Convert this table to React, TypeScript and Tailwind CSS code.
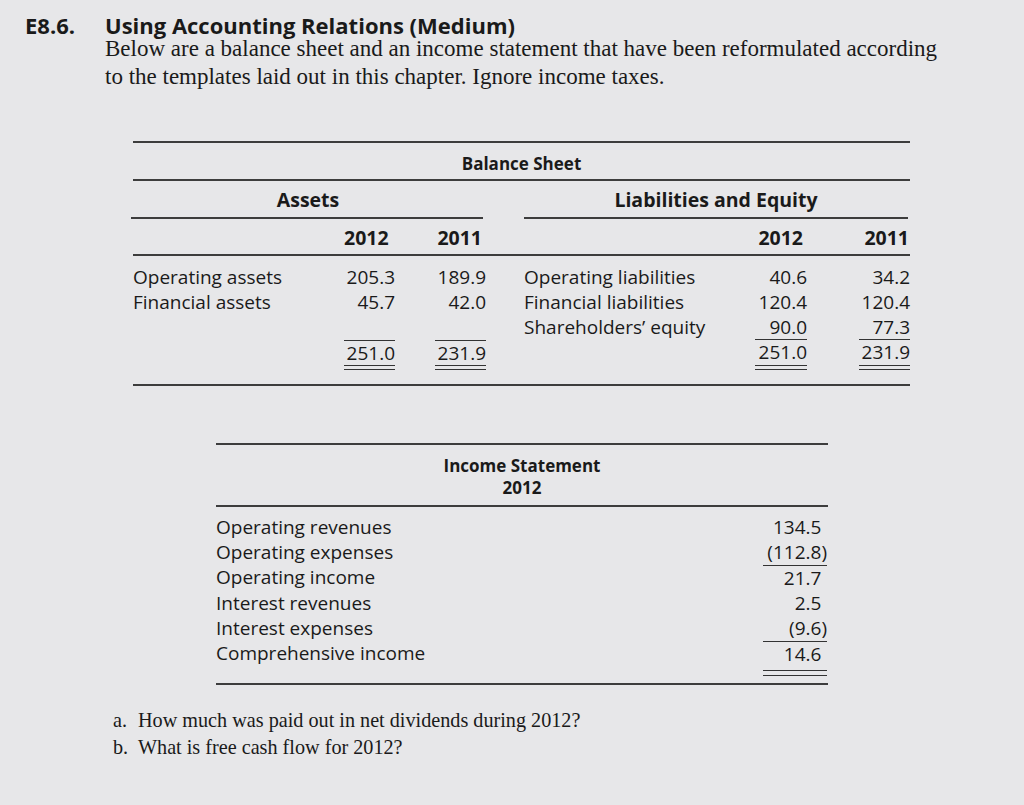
import React from "react";

const sans = "font-['Open_Sans',_'Noto_Sans',_sans-serif]";
const serif = "font-['Liberation_Serif',_'Times_New_Roman',_serif]";

function Line({ className = "" }: { className?: string }) {
  return <div className={`h-[2px] bg-[#3d3d3d] ${className}`} />;
}

function DoubleRule({ w }: { w: string }) {
  return (
    <div className={`${w} flex flex-col gap-[3px]`}>
      <div className="h-px bg-[#333]" />
      <div className="h-px bg-[#333]" />
    </div>
  );
}

function BalanceSection({
  labelW,
  gapW,
  c1W,
  c2W,
  rows,
  totals,
  underline3,
}: {
  labelW: string;
  gapW: string;
  c1W: string;
  c2W: string;
  rows: [string, string, string][];
  totals: [string, string];
  underline3: boolean;
}) {
  const full: [string, string, string][] = [...rows];
  while (full.length < 3) full.push(["", "", ""]);
  return (
    <div className="flex flex-col">
      {full.map((r, i) => (
        <div key={i} className="flex h-[25px] leading-[25px]">
          <div className={`${labelW}`}>{r[0]}</div>
          <div
            className={`${c1W} text-right ${
              i === 2 && underline3 ? "border-b border-[#333]" : ""
            }`}
          >
            {r[1]}
          </div>
          <div className={gapW} />
          <div
            className={`${c2W} text-right ${
              i === 2 && underline3 ? "border-b border-[#333]" : ""
            }`}
          >
            {r[2]}
          </div>
        </div>
      ))}
      <div className="flex">
        <div className={labelW} />
        <div className={`${c1W} flex flex-col`}>
          <div
            className={`h-[25px] leading-[25px] text-right ${
              underline3 ? "" : "border-t border-[#333]"
            }`}
          >
            {totals[0]}
          </div>
          <DoubleRule w="w-full" />
        </div>
        <div className={gapW} />
        <div className={`${c2W} flex flex-col`}>
          <div
            className={`h-[25px] leading-[25px] text-right ${
              underline3 ? "" : "border-t border-[#333]"
            }`}
          >
            {totals[1]}
          </div>
          <DoubleRule w="w-full" />
        </div>
      </div>
    </div>
  );
}

function Val({ v, cls = "" }: { v: string; cls?: string }) {
  const paren = v.startsWith("(");
  return (
    <div className={`w-[64px] text-right ${cls}`}>
      {v}
      {!paren && <span className="invisible">)</span>}
    </div>
  );
}

export default function App() {
  const income: [string, string, string][] = [
    ["Operating revenues", "134.5", ""],
    ["Operating expenses", "(112.8)", ""],
    ["Operating income", "21.7", "border-t border-[#333]"],
    ["Interest revenues", "2.5", ""],
    ["Interest expenses", "(9.6)", ""],
    ["Comprehensive income", "14.6", "border-t border-[#333]"],
  ];

  return (
    <div className="w-[1024px] h-[805px] overflow-hidden bg-[#e7e7e9] text-[#1a1a1a]">
      {/* Header */}
      <div className="flex pt-[15px]">
        <div className={`w-[105px] pl-[25px] ${sans} font-bold text-[22px] leading-[20px]`}>
          E8.6.
        </div>
        <div className="flex flex-col">
          <div className={`${sans} font-bold text-[22px] leading-[20px]`}>
            Using Accounting Relations (Medium)
          </div>
          <p className={`${serif} text-[23px] leading-[28px]`}>
            Below are a balance sheet and an income statement that have been reformulated according
            <br />
            to the templates laid out in this chapter. Ignore income taxes.
          </p>
        </div>
      </div>

      {/* Balance sheet */}
      <div className={`ml-[133px] w-[777px] mt-[50px] ${sans}`}>
        <Line />
        <div className="pt-[11px] pb-[5px] text-center font-bold text-[17px] leading-[20px]">
          Balance Sheet
        </div>
        <Line />
        <div className="flex">
          <div className="w-[353px] flex flex-col">
            <div className="pt-[7px] pb-[5px] w-[350px] text-center font-bold text-[19.5px] leading-[24px]">
              Assets
            </div>
            <Line className="w-[352px] -ml-[2px]" />
            <div className="flex pt-[7px] pb-[4px] font-bold text-[19.5px] leading-[24px]">
              <div className="w-[211px]" />
              <div className="w-[51px] text-right pr-[7px]">2012</div>
              <div className="w-[40px]" />
              <div className="w-[51px] text-right pr-[4px]">2011</div>
            </div>
          </div>
          <div className="w-[38px]" />
          <div className="w-[386px] flex flex-col">
            <div className="pt-[7px] pb-[5px] w-[384px] text-center font-bold text-[19.5px] leading-[24px]">
              Liabilities and Equity
            </div>
            <Line className="w-[384px]" />
            <div className="flex pt-[7px] pb-[4px] font-bold text-[19.5px] leading-[24px]">
              <div className="w-[231px]" />
              <div className="w-[52px] text-right pr-[4px]">2012</div>
              <div className="w-[52px]" />
              <div className="w-[51px] text-right pr-[1px]">2011</div>
            </div>
          </div>
        </div>
        <Line />
        <div className="flex pt-[9px] text-[19px]">
          <BalanceSection
            labelW="w-[211px]"
            gapW="w-[40px]"
            c1W="w-[51px]"
            c2W="w-[51px]"
            rows={[
              ["Operating assets", "205.3", "189.9"],
              ["Financial assets", "45.7", "42.0"],
            ]}
            totals={["251.0", "231.9"]}
            underline3={false}
          />
          <div className="w-[38px]" />
          <BalanceSection
            labelW="w-[231px]"
            gapW="w-[52px]"
            c1W="w-[52px]"
            c2W="w-[51px]"
            rows={[
              ["Operating liabilities", "40.6", "34.2"],
              ["Financial liabilities", "120.4", "120.4"],
              ["Shareholders\u2019 equity", "90.0", "77.3"],
            ]}
            totals={["251.0", "231.9"]}
            underline3={true}
          />
        </div>
        <Line className="mt-[14px]" />
      </div>

      {/* Income statement */}
      <div className={`ml-[216px] w-[612px] mt-[57px] ${sans}`}>
        <Line />
        <div className="pt-[10px] pb-[6px] text-center font-bold text-[17px] leading-[22px]">
          Income Statement
          <br />
          2012
        </div>
        <Line />
        <div className="pt-[8px] text-[19px] leading-[25px]">
          {income.map(([label, v, cls]) => (
            <div key={label} className="flex justify-between pr-[1px]">
              <div>{label}</div>
              <Val v={v} cls={cls} />
            </div>
          ))}
          <div className="flex justify-end pr-[1px] pt-[3px]">
            <div className="w-[64px] flex flex-col gap-[4px]">
              <div className="h-px bg-[#333]" />
              <div className="h-px bg-[#333]" />
            </div>
          </div>
        </div>
        <Line className="mt-[7px]" />
      </div>

      {/* Questions */}
      <div className={`ml-[113px] mt-[22px] ${serif} text-[20.2px] leading-[27px]`}>
        <div className="flex">
          <span className="w-[25px]">a.</span>
          <span>How much was paid out in net dividends during 2012?</span>
        </div>
        <div className="flex">
          <span className="w-[25px]">b.</span>
          <span>What is free cash flow for 2012?</span>
        </div>
      </div>
    </div>
  );
}
